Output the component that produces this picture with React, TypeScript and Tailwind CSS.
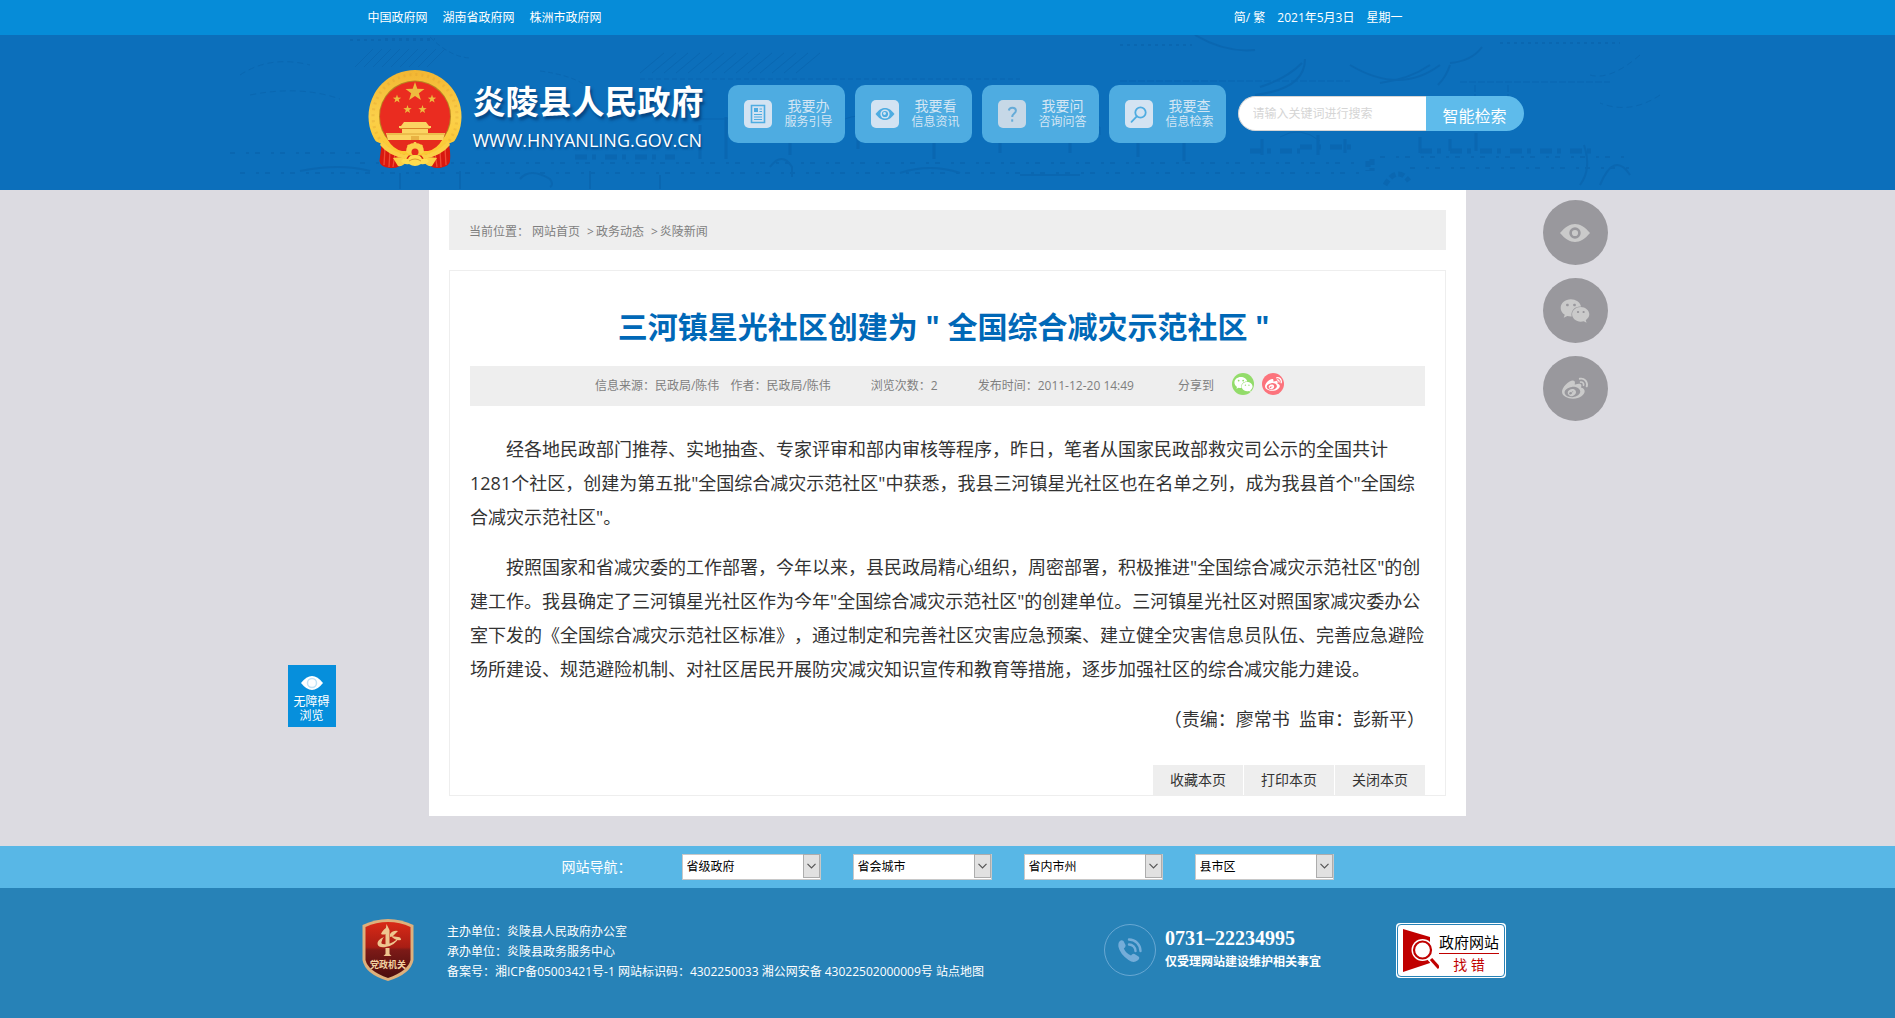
import type { ReactNode } from "react";
import { FaWeibo, FaWeixin } from "react-icons/fa";

const TOP_LINKS = ["中国政府网", "湖南省政府网", "株洲市政府网"];

const SITE_GROUPS = ["省级政府", "省会城市", "省内市州", "县市区"];

const PAGE_ACTIONS = ["收藏本页", "打印本页", "关闭本页"];

const STAR =
  "M0,-10 L2.3,-3.2 L9.5,-3.1 L3.8,1.2 L5.9,8.1 L0,4 L-5.9,8.1 L-3.8,1.2 L-9.5,-3.1 L-2.3,-3.2 Z";

// icons
function DocIcon() {
  return (
    <svg viewBox="0 0 28 28" className="h-7 w-7" fill="none" stroke="#4eace1">
      <path d="M7.5 5.5h13v17h-13z" strokeWidth="1.6" />
      <path d="M10 8h4v4h-4z" fill="#4eace1" stroke="none" />
      <path d="M15.5 9H18M15.5 11.5H18M10 14.5h8M10 17h8M10 19.5h8" strokeWidth="1.2" />
    </svg>
  );
}

function EyeIcon() {
  return (
    <svg viewBox="0 0 28 28" className="h-7 w-7">
      <path d="M4.5 14C8 9.5 11 8 14 8s6 1.5 9.5 6c-3.5 4.5-6.5 6-9.5 6s-6-1.5-9.5-6z" fill="#4eace1" />
      <circle cx="14" cy="14" r="4.6" fill="#d3e3f2" />
      <circle cx="14" cy="14" r="3.1" fill="#4eace1" />
      <circle cx="13.5" cy="13.5" r="1.4" fill="#d3e3f2" />
    </svg>
  );
}

function QuestionIcon() {
  return (
    <svg viewBox="0 0 28 28" className="h-7 w-7" fill="none" stroke="#65abd8" strokeWidth="2">
      <path d="M10.8 10.5c.3-1.8 1.6-2.7 3.5-2.7 2.200 0 3.6 1.1 3.600 3 0 2.7-3.7 3-3.7 6.2" />
      <path d="M14.200 19.300v2.400" />
    </svg>
  );
}

function SearchIcon() {
  return (
    <svg viewBox="0 0 28 28" className="h-7 w-7" fill="none" stroke="#4eace1" strokeWidth="1.8">
      <circle cx="15.5" cy="12.5" r="5.2" />
      <path d="M11.8 16.3L6.5 21.8" strokeLinecap="round" />
    </svg>
  );
}

function SideEyeIcon() {
  return (
    <svg viewBox="0 0 30 18" className="h-[18px] w-[30px]">
      <path d="M0 9C5 3 10 0 15 0s10 3 15 9c-5 6-10 9-15 9S5 15 0 9z" fill="#cacaca" />
      <circle cx="15" cy="9" r="4.4" fill="none" stroke="#99989d" strokeWidth="2.6" />
    </svg>
  );
}

function PhoneIcon() {
  return (
    <svg viewBox="0 0 26 26" className="h-[26px] w-[26px]" fill="none" stroke="currentColor">
      <path
        d="M2 5q2-3 4.500-1L8.500 8q.5 2-1.700 3.500Q9 16.500 14 18.500q1.500-2.200 3.500-1.500l4 2.500q2 2-1 4-4 3-9-.5Q3 17 1.500 10 1 7 2 5z"
        fill="currentColor"
        stroke="none"
      />
      <path d="M12 2.500a11.500 11.500 0 0 1 11.500 11.500M12 7.500a6.500 6.500 0 0 1 6.500 6.500" strokeWidth="2.4" strokeLinecap="round" />
    </svg>
  );
}

const SERVICES: { title: string; sub: string; icon: ReactNode; box: string }[] = [
  { title: "我要办", sub: "服务引导", icon: <DocIcon />, box: "bg-[#d3e3f2]" },
  { title: "我要看", sub: "信息资讯", icon: <EyeIcon />, box: "bg-[#d3e3f2]" },
  { title: "我要问", sub: "咨询问答", icon: <QuestionIcon />, box: "bg-[#c6d8e7]" },
  { title: "我要查", sub: "信息检索", icon: <SearchIcon />, box: "bg-[#d3e3f2]" },
];

// national emblem
function Emblem() {
  return (
    <svg viewBox="0 0 94 99" className="mt-[35px] h-[99px] w-[94px] shrink-0" aria-label="国徽">
      <defs>
        <linearGradient id="gold" x1="0" y1="0" x2="0" y2="1">
          <stop offset="0" stopColor="#f2b632" />
          <stop offset="0.5" stopColor="#fbd04a" />
          <stop offset="1" stopColor="#fcc62c" />
        </linearGradient>
        <clipPath id="ringClip">
          <path d="M0 0h94v68L80 74Q68 85 47 86Q26 85 14 74L0 68z" />
        </clipPath>
      </defs>
      <path d="M14 69 Q20 83 47 86 Q74 83 80 69 Q83 82 82 91 Q82 96 72 98 Q62 99 58 91 L36 91 Q32 99 22 98 Q12 97 11.5 91 Q13 80 14 69z" fill="#d8180f" />
      <path d="M17 78l-1 17M22 81l-1 16M77 78l1 17M72 81l1 16M67 83l2 14M27 83l-2 14" stroke="#f04a35" strokeWidth="1.3" />
      <circle cx="47" cy="46.5" r="46.5" fill="url(#gold)" clipPath="url(#ringClip)" />
      <g clipPath="url(#ringClip)">
        <circle cx="47" cy="46.5" r="42" fill="none" stroke="#d6952a" strokeWidth="3" strokeDasharray="2 4" opacity="0.25" />
      </g>
      <circle cx="47" cy="46.5" r="36" fill="#b98321" />
      <circle cx="47" cy="46.5" r="35" fill="#ea2c20" />
      <g fill="#eebb3f">
        <path d={STAR} transform="translate(47 22)" />
        <path d={STAR} transform="translate(29 29) scale(.44)" />
        <path d={STAR} transform="translate(64 29) scale(.44)" />
        <path d={STAR} transform="translate(39.5 39.5) scale(.44)" />
        <path d={STAR} transform="translate(54.5 39.5) scale(.44)" />
      </g>
      <g fill="#fbd462">
        <path d="M36 52h22l3 4h2v2H31v-2h2z" />
        <path d="M34 59h26v4H34z" />
        <path d="M18 63h59l-2 7H20z" />
      </g>
      <path d="M32 58.5h30M19 64h57" stroke="#d79a2b" strokeWidth="0.8" />
      <path d="M43 66h8v4h-8z" fill="#e9b344" />
      <path d="M20 70h54q-5 9-14 11H34q-9-2-14-11z" fill="#e52a1d" />
      <path d="M14 71q12 13 27 14l-3 4q-17-3-26-14zM80 71Q68 84 53 85l3 4q17-3 26-14z" fill="#fbcf45" />
      <path d="M38 82q0-9 9-9t9 9l-3 2q-6-5-12 0z" fill="#fbd04a" />
      <path d="M40 75l2 3M47 72v4M54 75l-2 3" stroke="#fbd04a" strokeWidth="2.5" />
      <circle cx="47" cy="82" r="3.5" fill="#e52a1d" />
      <path d="M25 88q10-2 14 2-3 7-9 6zM69 88q-10-2-14 2 3 7 9 6z" fill="#fbcf45" />
      <path d="M33 91q3-4 7-2 1-4 7-4t7 4q4-2 7 2-3 4-8 3-6 4-12 0-5 1-8-3z" fill="#ffdc4e" />
      <path d="M41 91q6-4 12 0" stroke="#d79a2b" fill="none" />
    </svg>
  );
}

// line art of old town roofs behind the header
function HeaderScene() {
  return (
    <svg
      className="pointer-events-none absolute inset-0 h-full w-full"
      viewBox="0 0 1895 155"
      preserveAspectRatio="xMidYMid slice"
      fill="none"
      stroke="#07599f"
      aria-hidden="true"
    >
      <g opacity="0.35">
        <path d="M350 5h80M385 4h50M1120 10h72M1500 8h120" strokeDasharray="3 4" strokeWidth="2" />
        <path d="M355 32l18-18M364 32l18-18M373 32l18-18M382 32l18-18M391 32l18-18M400 32l18-18M409 32l18-18M418 32l18-18M427 32l18-18" />
        <path d="M640 38l24-20M652 38l24-20M664 38l24-20M676 38l24-20M688 38l24-20M700 38l24-20M712 38l24-20M724 38l24-20M736 38l24-20M748 38l24-20M760 38l24-20M772 38l24-20M784 38l24-20M796 38l24-20" />
        <path d="M430 2q20 20 40 21M540 36q30 4 45 14M640 44h380" strokeDasharray="5 3" />
        <path d="M1195 0q30 18 60 15M1255 60q50-6 50-36M1260 52q26-8 42-24M1350 30q50 30 90 0M1380 48q30-4 50-18M1450 28q22-2 32-16M1450 30q-4 12-12 20" strokeWidth="2" />
        <path d="M1120 46h230M1460 47h150M1475 50v36M1508 50v30" strokeDasharray="7 2" />
        <path d="M1640 20q-30 26-50 20M1660 60q-30 20-60 8M240 40q30-20 70-10M250 60q50-10 90 4" strokeDasharray="6 4" />
        <path d="M230 118h130M360 128h1000M240 138h1120M1380 122h250M1410 133h220" strokeDasharray="5 11 3 6" strokeWidth="2" />
        <path d="M575 122h100M650 110h40M1250 116h50M1300 112h60M1420 116h180" strokeWidth="5" strokeDasharray="12 5 4 9" />
        <path d="M700 90v34M726 82v42M790 90v30M858 90v24M934 86v38M1000 88v30M1070 84v34M1138 102v20M1184 104v22M1262 104v16M1318 100v20M1345 104v14M1420 102v16M1450 104v12M1476 98v18" strokeWidth="3" />
        <path d="M700 84h26q6 0 6-8h20v8M835 90q20-16 50-4M1280 102q20-12 40 4M1060 92h40v8" />
        <path d="M300 136q40-8 70 0M400 138v16M460 136v18M520 144q10-12 30 0 4 6 0 8M590 136v18M660 140v14M770 132q12-16 22 0v10M900 138q30-10 60 0M1020 140h60" strokeWidth="2" />
        <path d="M1368 126v10M1372 124v12M1385 150q12-20 24-4" strokeWidth="5" strokeDasharray="6 3" />
        <path d="M1600 150q14-34 30-10M1584 110q8 24-4 40" strokeWidth="2" />
      </g>
    </svg>
  );
}

function Header() {
  return (
    <header>
      <div className="bg-[#068cd8] text-xs text-white">
        <div className="mx-auto flex h-[35px] max-w-[1160px] items-center justify-between">
          <nav className="flex gap-[15px]">
            {TOP_LINKS.map((label) => (
              <a key={label} href="#">
                {label}
              </a>
            ))}
          </nav>
          <div className="flex gap-3 pr-[125px]">
            <span>
              <a href="#">简</a>/ <a href="#">繁</a>
            </span>
            <span>2021年5月3日</span>
            <span>星期一</span>
          </div>
        </div>
      </div>

      <div className="relative bg-[#0c6fbb]">
        <HeaderScene />
        <div className="relative mx-auto flex h-[155px] max-w-[1160px] items-start">
          <Emblem />
          <div className="mt-[47px] ml-[11px] w-[249px] shrink-0 text-white">
            <h1 className="text-[33px] leading-10 font-bold whitespace-nowrap text-shadow-[2px_3px_3px_rgb(0_40_90/0.6)]">
              炎陵县人民政府
            </h1>
            <p className="text-lg leading-9 text-shadow-[1px_2px_2px_rgb(0_40_90/0.5)]">
              WWW.HNYANLING.GOV.CN
            </p>
          </div>

          <nav className="mt-[50px] ml-[6px] flex shrink-0 gap-[10px]">
            {SERVICES.map(({ title, sub, icon, box }) => (
              <a
                key={title}
                href="#"
                className="flex h-[58px] w-[117px] items-center rounded-[10px] bg-[#4eace1] pl-4 text-center text-[#d3e6f4]"
              >
                <span className={`h-7 w-7 rounded-[5px] ${box}`}>{icon}</span>
                <span className="ml-3 flex w-[50px] flex-col">
                  <span className="text-sm leading-4">{title}</span>
                  <span className="text-xs leading-4">{sub}</span>
                </span>
              </a>
            ))}
          </nav>

          <form className="mt-[61px] ml-3 flex h-[35px] min-w-0 flex-1">
            <input
              type="text"
              aria-label="搜索"
              placeholder="请输入关键词进行搜索"
              className="w-[188px] rounded-l-full border border-r-0 border-[#d5d5d5] bg-white pl-[14px] text-xs text-gray-700 outline-none placeholder:text-[#d5d5d5]"
            />
            <button type="button" className="w-[98px] rounded-r-full bg-[#5ebbeb] pt-1 text-base text-white">
              智能检索
            </button>
          </form>
        </div>
      </div>
    </header>
  );
}

function Article() {
  return (
    <main className="mx-auto w-full max-w-[1037px] bg-white p-5">
      <div className="flex h-10 items-center bg-[#eeeeee] px-5 pt-[3px] text-xs text-[#7f7f7f]">
        <span className="mr-[3px]">当前位置：</span>
        <a href="#">网站首页</a>
        <span className="mr-[2px] ml-[7px]">&gt;</span>
        <a href="#">政务动态</a>
        <span className="mr-[2px] ml-[7px]">&gt;</span>
        <a href="#">炎陵新闻</a>
      </div>

      <article className="mt-5 border border-[#eeeeee] px-5">
        <h2 className="pt-9 text-center text-[30px] leading-10 font-bold text-[#0068b7]">
          三河镇星光社区创建为 " 全国综合减灾示范社区 "{"\u00a0"}
        </h2>

        <div className="mt-[19px] flex h-10 items-center justify-center bg-[#eeeeee] pr-4 text-xs text-[#7f7f7f]">
          <span>信息来源：民政局/陈伟</span>
          <span className="ml-[11px]">作者：民政局/陈伟</span>
          <span className="ml-10">浏览次数：2</span>
          <span className="ml-10">发布时间：2011-12-20 14:49</span>
          <span className="ml-11">分享到</span>
          <a
            href="#"
            aria-label="分享到微信"
            className="mb-1 ml-[18px] flex h-[22px] w-[22px] items-center justify-center rounded-full bg-[#93dc6a] text-white"
          >
            <FaWeixin className="h-[19px] w-[19px]" />
          </a>
          <a
            href="#"
            aria-label="分享到微博"
            className="mb-1 ml-2 flex h-[22px] w-[22px] items-center justify-center rounded-full bg-[#fc737c] text-white"
          >
            <FaWeibo className="h-[17px] w-[17px]" />
          </a>
        </div>

        <div className="mt-[26px] flex flex-col gap-4 text-lg leading-[34px] text-[#333333]">
          <p className="indent-9">
            经各地民政部门推荐、实地抽查、专家评审和部内审核等程序，昨日，笔者从国家民政部救灾司公示的全国共计1281个社区，创建为第五批"全国综合减灾示范社区"中获悉，我县三河镇星光社区也在名单之列，成为我县首个"全国综合减灾示范社区"。
          </p>
          <p className="indent-9">
            按照国家和省减灾委的工作部署，今年以来，县民政局精心组织，周密部署，积极推进"全国综合减灾示范社区"的创建工作。我县确定了三河镇星光社区作为今年"全国综合减灾示范社区"的创建单位。三河镇星光社区对照国家减灾委办公室下发的《全国综合减灾示范社区标准》，通过制定和完善社区灾害应急预案、建立健全灾害信息员队伍、完善应急避险场所建设、规范避险机制、对社区居民开展防灾减灾知识宣传和教育等措施，逐步加强社区的综合减灾能力建设。
          </p>
          <p className="text-right">（责编：廖常书{"\u00a0\u00a0"}监审：彭新平）</p>
        </div>

        <div className="mt-[29px] flex justify-end gap-px">
          {PAGE_ACTIONS.map((label) => (
            <button key={label} type="button" className="h-[30px] w-[90px] bg-[#eeeeee] text-sm text-[#333333]">
              {label}
            </button>
          ))}
        </div>
      </article>
    </main>
  );
}

function SiteNav() {
  return (
    <div className="flex h-[42px] items-start justify-center gap-8 bg-[#58b7e6] pt-[7px]">
      <span className="w-[88px] text-sm leading-7 text-white">网站导航：</span>
      {SITE_GROUPS.map((label) => (
        <div key={label} className="relative h-[26px] w-[139px]">
          <select
            aria-label={label}
            className="h-full w-full appearance-none border border-[#c8c8c8] bg-white pl-1 text-xs text-black"
          >
            <option>{label}</option>
          </select>
          <span className="pointer-events-none absolute inset-y-px right-px flex w-[17px] items-center justify-center border border-[#adadad] bg-[#e1e1e1]">
            <svg viewBox="0 0 9 6" className="h-[6px] w-[9px]" fill="none" stroke="#555555" strokeWidth="1.2">
              <path d="M0.5 0.8L4.5 4.8L8.5 0.8" />
            </svg>
          </span>
        </div>
      ))}
    </div>
  );
}

function PartyBadge() {
  return (
    <svg viewBox="0 0 52 62" className="h-[62px] w-[52px] shrink-0" aria-label="党政机关">
      <defs>
        <linearGradient id="shield" x1="0" y1="0" x2="0" y2="1">
          <stop offset="0" stopColor="#d92a17" />
          <stop offset="0.45" stopColor="#a81d14" />
          <stop offset="0.5" stopColor="#7c1a17" />
          <stop offset="1" stopColor="#4a0d0e" />
        </linearGradient>
      </defs>
      <path d="M26 0Q39 0 51.5 6V41Q49 55 26 62Q3 55 0.5 41V6Q13 0 26 0z" fill="#deb07c" />
      <path d="M26 3Q38 3 48.5 8V41Q46 52 26 59Q6 52 3.5 41V8Q14 3 26 3z" fill="url(#shield)" />
      <g fill="#eec58f">
        <path d="M23.5 12l1-7 3 6v15h-4zM23.5 29h4v6l2 2h-8l2-2z" />
        <path d="M20 13q2-3 4-4v6q-3 1-5 0zM28 15q3-4 8-3l-2 2q-2 3-6 4z" />
        <path d="M22 18q-7 3-6.500 7 1 4 8 3 9-1 14-10-6 6-12 7-7 1-6-2 .5-3 2.500-5z" />
        <path d="M29 17l7 1q3 0 3 3-6 1-10-4z" />
      </g>
      <text x="26" y="48.5" textAnchor="middle" fontSize="9" fontWeight="700" fill="#f3d3a4">
        党政机关
      </text>
    </svg>
  );
}

function ReportBadge() {
  return (
    <a href="#" className="h-[55px] w-[110px] shrink-0 rounded bg-white p-px">
      <span className="flex h-full rounded border border-[#2782b7] bg-white">
        <svg viewBox="0 0 41 51" className="h-[51px] w-[41px] shrink-0">
          <path d="M5 4l27 8v26L5 47z" fill="#c00000" />
          <circle cx="24.5" cy="25" r="11" fill="#ffffff" />
          <path d="M31 32l9 10" stroke="#ffffff" strokeWidth="6" />
          <circle cx="24.5" cy="25" r="8.5" fill="#ffffff" stroke="#c00000" strokeWidth="2.2" />
          <path d="M33 34l8 9" stroke="#c00000" strokeWidth="3.2" />
        </svg>
        <span className="flex flex-col items-center pt-[6px] whitespace-nowrap">
          <span className="border-b border-[#c00000] text-[15px] leading-[22px] text-black">政府网站</span>
          <span className="text-sm leading-[22px] text-[#c00000]">找 错</span>
        </span>
      </span>
    </a>
  );
}

function Footer() {
  return (
    <footer className="flex-1 bg-[#2782b7] text-white">
      <div className="mx-auto flex h-[124px] max-w-[1171px] items-center pr-[27px]">
        <PartyBadge />
        <div className="ml-[33px] flex-1 pt-1 text-xs leading-5">
          <p>主办单位：炎陵县人民政府办公室</p>
          <p>承办单位：炎陵县政务服务中心</p>
          <p>
            备案号：<a href="#">湘ICP备05003421号-1</a> 网站标识码：4302250033{" "}
            <a href="#">湘公网安备 43022502000009号</a> <a href="#">站点地图</a>
          </p>
        </div>
        <div className="flex w-[292px] items-center">
          <span className="flex h-[52px] w-[52px] items-center justify-center rounded-full border border-[#68a8d3] text-[#74add9]">
            <PhoneIcon />
          </span>
          <div className="ml-[9px] font-bold">
            <p className="font-['Liberation_Serif',serif] text-xl leading-6">0731–22234995</p>
            <p className="text-xs leading-6">仅受理网站建设维护相关事宜</p>
          </div>
        </div>
        <ReportBadge />
      </div>
    </footer>
  );
}

// widgets floating beside the article
function FloatingTools() {
  return (
    <>
      <a
        href="#"
        className="fixed top-[665px] left-1/2 -ml-[660px] flex h-[62px] w-12 flex-col items-center bg-[#068fdc] pt-[11px] text-xs leading-[14px] text-white"
      >
        <svg viewBox="0 0 22 14" className="mb-[5px] h-[14px] w-[22px]">
          <path d="M0 7Q11-7 22 7Q11 21 0 7z" fill="#ffffff" />
          <circle cx="11" cy="7" r="4.5" fill="none" stroke="#c2e2f6" strokeWidth="1.5" />
        </svg>
        <span>无障碍</span>
        <span>浏览</span>
      </a>

      <div className="fixed top-[200px] left-1/2 ml-[595px] flex flex-col gap-[13px] text-[#cacaca]">
        <button type="button" aria-label="无障碍" className="flex h-[65px] w-[65px] items-center justify-center rounded-full bg-[#99989d]">
          <SideEyeIcon />
        </button>
        <button type="button" aria-label="微信" className="flex h-[65px] w-[65px] items-center justify-center rounded-full bg-[#99989d]">
          <FaWeixin className="h-[30px] w-[30px]" />
        </button>
        <button type="button" aria-label="微博" className="flex h-[65px] w-[65px] items-center justify-center rounded-full bg-[#99989d]">
          <FaWeibo className="h-[26px] w-[26px]" />
        </button>
      </div>
    </>
  );
}

// page
export default function App() {
  return (
    <div
      lang="zh-CN"
      className="flex min-h-screen flex-col bg-[#dcdbe1] font-['Open_Sans','Noto_Sans_CJK_SC',sans-serif] [text-spacing-trim:space-all]"
    >
      <Header />
      <Article />
      <div className="h-[30px]" />
      <SiteNav />
      <Footer />
      <FloatingTools />
    </div>
  );
}
